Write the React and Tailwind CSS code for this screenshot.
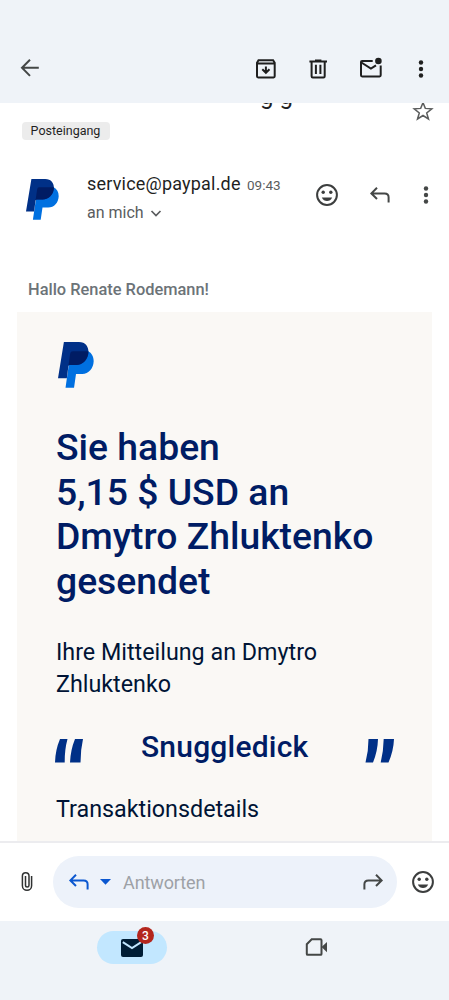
const Icon = ({ children, className = "" }) => (
  <svg
    width="26"
    height="26"
    viewBox="-13 -13 26 26"
    fill="none"
    stroke="currentColor"
    strokeWidth="2"
    className={`shrink-0 ${className}`}
  >
    {children}
  </svg>
);

const Dots = ({ className }) => (
  <Icon className={className}>
    <g fill="currentColor" stroke="none">
      <circle cy="-6.5" r="2.2" />
      <circle r="2.2" />
      <circle cy="6.5" r="2.2" />
    </g>
  </Icon>
);

const Smiley = ({ className }) => (
  <Icon className={className}>
    <circle r="9.9" />
    <g fill="currentColor" stroke="none">
      <circle cx="-3.8" cy="-2.7" r="1.7" />
      <circle cx="3.8" cy="-2.7" r="1.7" />
      <path d="M-5.2 2.6H5.2C4.2 5 2.3 6.1 0 6.1S-4.2 5-5.2 2.6Z" />
    </g>
  </Icon>
);

const Reply = ({ className }) => (
  <Icon className={className}>
    <path d="M-3-7.2-8.6-1.6-3 4M-8.6-1.6H4.6C7.3-1.6 8.6-.2 8.6 2.2V7.4" />
  </Icon>
);

const PayPal = ({ className }) => (
  <svg viewBox="0 0 110 138" preserveAspectRatio="none" className={className}>
    <path fill="#0070e0" d="M40 28H92C103 33 109 44 109 58C108 80 94 96 74 96H55L49 137H23L33 68Z" />
    <path fill="#003087" d="M18 0H64C84 0 94 14 93 32C91 54 75 69 55 69H37C34 69 32 70 31.500 74L27 109H0Z" />
    <path fill="#001c64" d="M46 28H92.800C93 52 76 69 55 69H37C34 69 32 70 31.500 74L37 36C38 30 41 28 46 28Z" />
  </svg>
);

export default function App() {
  return (
    <div className="flex h-[1000px] w-[449px] flex-col overflow-hidden bg-white font-['Roboto',sans-serif] text-[#1f1f1f]">
      <header className="flex h-[103px] shrink-0 items-start bg-[#eff3f8] pt-14">
        <Icon className="ml-[17px] -mt-px text-[#444746]">
          <path d="M0-8.300-8-.2 0 7.900M-8-.2H8.800" />
        </Icon>
        <Icon className="ml-[210px]">
          <path d="M-9-6.300-7.500-8.700H7.100L8.700-6.300V7.300Q8.700 8.400 7.600 8.400H-7.900Q-9 8.400-9 7.300ZM-9-5.600H8.700M-.1-2.500V3.500M-3.700.3-.1 3.800 3.500.3" />
        </Icon>
        <Icon className="ml-[26px]">
          <path d="M-8.600-7.600H9M-3-8.600H3.400M-6.400-7V7.200Q-6.400 8.400-5.200 8.400H5.500Q6.700 8.400 6.700 7.200V-7M-2.100-4.200V5M2.400-4.200V5" />
        </Icon>
        <Icon className="ml-[27px]">
          <path d="M1.700-8.100H-8.900Q-10-8.100-10-7V6.300Q-10 7.400-8.900 7.400H8.600Q9.700 7.400 9.700 6.300V-3.600M-9.600-6.500-.1-.4 5-3.600" />
          <circle cx="7.400" cy="-8" r="3.300" fill="currentColor" stroke="none" />
        </Icon>
        <Dots className="ml-6" />
      </header>

      <div className="flex h-[19px] shrink-0 overflow-hidden">
        <div className="ml-[260px] -mt-[19px] w-[145px] text-[24px] leading-6">g g</div>
        <Icon className="ml-[5px] -mt-[5px] text-[#5b5d5d]">
          <path strokeWidth="1.500" d="M0-8.400 2.300-2.600 8.800-2.200 3.700 1.900 5.500 8 0 4.500-5.500 8-3.700 1.900-8.800-2.200-2.300-2.600Z" />
        </Icon>
      </div>
      <div className="ml-[22px] flex h-[18px] w-[88px] shrink-0 items-center justify-center rounded bg-[#ececec] pt-px pr-px text-[12.500px]">
        Posteingang
      </div>

      <section className="flex h-[136px] shrink-0 items-start pt-8">
        <PayPal className="mt-[7px] ml-[26px] h-[41px] w-[33px]" />
        <div className="ml-[28px] w-[226.500px]">
          <div className="-mt-0.5 flex h-[26px] items-baseline whitespace-nowrap pt-0.5 leading-6">
            <span className="w-[160px] text-[18px] tracking-[.2px]">service@paypal.de</span>
            <span className="text-[13.500px] text-[#5a5c5e]">09:43</span>
          </div>
          <div className="flex h-6 items-center pt-[9px] text-[16px] text-[#5a5c5e]">
            <span className="w-[56px] whitespace-nowrap">an mich</span>
            <svg width="26" height="26" viewBox="-13 -13 26 26" fill="none" stroke="currentColor" strokeWidth="1.700">
              <path d="M-4.500-2 0 2.500 4.500-2" />
            </svg>
          </div>
        </div>
        <Smiley className="mt-[10px] text-[#3c3e3e]" />
        <Reply className="mt-[10px] ml-[27px] text-[#444746]" />
        <Dots className="mt-[10px] ml-5 text-[#444746]" />
      </section>

      <div className="h-9 shrink-0 pt-px pl-7 text-[16.400px] leading-[26px] font-medium text-[#6c7378]">
        Hallo Renate Rodemann!
      </div>

      <main className="mx-[17px] flex h-[529px] shrink-0 flex-col overflow-hidden bg-[#faf8f5] pt-[30px] pl-[39px] text-[#001435]">
        <PayPal className="ml-[2px] h-[46px] w-[36px] shrink-0" />
        <h1 className="mt-[37px] text-[37.300px] leading-[44.500px] font-medium text-[#001c64]">
          Sie haben
          <br />
          5,15 $ USD an
          <br />
          Dmytro Zhluktenko
          <br />
          gesendet
        </h1>
        <p className="mt-[33px] text-[23.300px] leading-8">
          Ihre Mitteilung an Dmytro
          <br />
          Zhluktenko
        </p>
        <div className="mt-[29px] flex h-[34px] items-start">
          <svg width="29" height="24" viewBox="0 0 29 24" fill="#003087" className="-ml-px mt-[10px]">
            <path d="M5 0H12.500Q9.500 11 9.700 23.500H0Q.3 11 5 0ZM20 0H28Q25.500 11 25.500 23.500H15Q15.500 11 20 0Z" />
          </svg>
          <div className="mt-0.5 ml-[57px] w-[169px] text-[30px] leading-8 font-medium tracking-[.2px] text-[#001c64]">Snuggledick</div>
          <svg width="29" height="24" viewBox="0 0 29 24" fill="#003087" className="mt-[10px] ml-[55px]">
            <path d="M3.500 0H13Q12.700 12 8 23.500H.5Q3.500 12 3.500 0ZM18.700 0H29Q28.500 12 23.500 23.500H15.700Q18.500 12 18.700 0Z" />
          </svg>
        </div>
        <p className="mt-[30px] text-[23.300px] leading-8">Transaktionsdetails</p>
      </main>

      <div className="flex h-[80px] shrink-0 items-center border-t-2 border-[#ececef]">
        <Icon className="ml-[14px] -mt-[3px] text-[#303232]">
          <path
            strokeWidth="1.500"
            d="M4.600-5V4.700A4.600 4.600 0 0 1-4.600 4.700V-5A3.300 3.300 0 0 1 2-5V4.200A1.700 1.700 0 0 1-1.500 4.200V-5"
          />
        </Icon>
        <div className="ml-[13px] flex h-[52px] w-[344px] items-center rounded-full bg-[#edf2fa]">
          <Reply className="ml-[13px] text-[#0b57d0]" />
          <svg width="11" height="6" viewBox="0 0 11 6" fill="#0b57d0" className="ml-[8px]">
            <path d="M0 0H11L5.500 5.700Z" />
          </svg>
          <div className="ml-[12px] w-[237px] text-[18px] tracking-[-.1px] text-[#9da1a6]">Antworten</div>
          <Reply className="-scale-x-100 text-[#444746]" />
        </div>
        <Smiley className="ml-[13px] text-[#3c3e3e]" />
      </div>

      <nav className="flex h-[79px] shrink-0 items-start bg-[#eff3f8] pt-[10px]">
        <div className="relative ml-[97px] flex h-[33px] w-[70px] items-center justify-center rounded-full bg-[#c2e7ff]">
          <svg width="22" height="18" viewBox="0 0 22 18">
            <rect width="22" height="18" rx="2" fill="#001d35" />
            <path d="M1.800 3.200 11 9 20.200 3.200" fill="none" stroke="#c2e7ff" strokeWidth="2" />
          </svg>
          <span className="absolute -top-1 left-[40px] flex size-[17px] items-center justify-center rounded-full bg-[#b3261e] text-[12px] font-medium text-white">
            3
          </span>
        </div>
        <Icon className="mt-[3px] ml-[136px] text-[#444746]">
          <path d="M-4.300-7.700H4.600Q5.500-7.700 5.500-6.800V6.900Q5.500 7.800 4.600 7.800H-8.300Q-9.200 7.800-9.200 6.900V-2.800Z" />
          <path d="M5.500 0 11-5V5.200Z" fill="currentColor" stroke="none" />
        </Icon>
      </nav>
    </div>
  );
}
